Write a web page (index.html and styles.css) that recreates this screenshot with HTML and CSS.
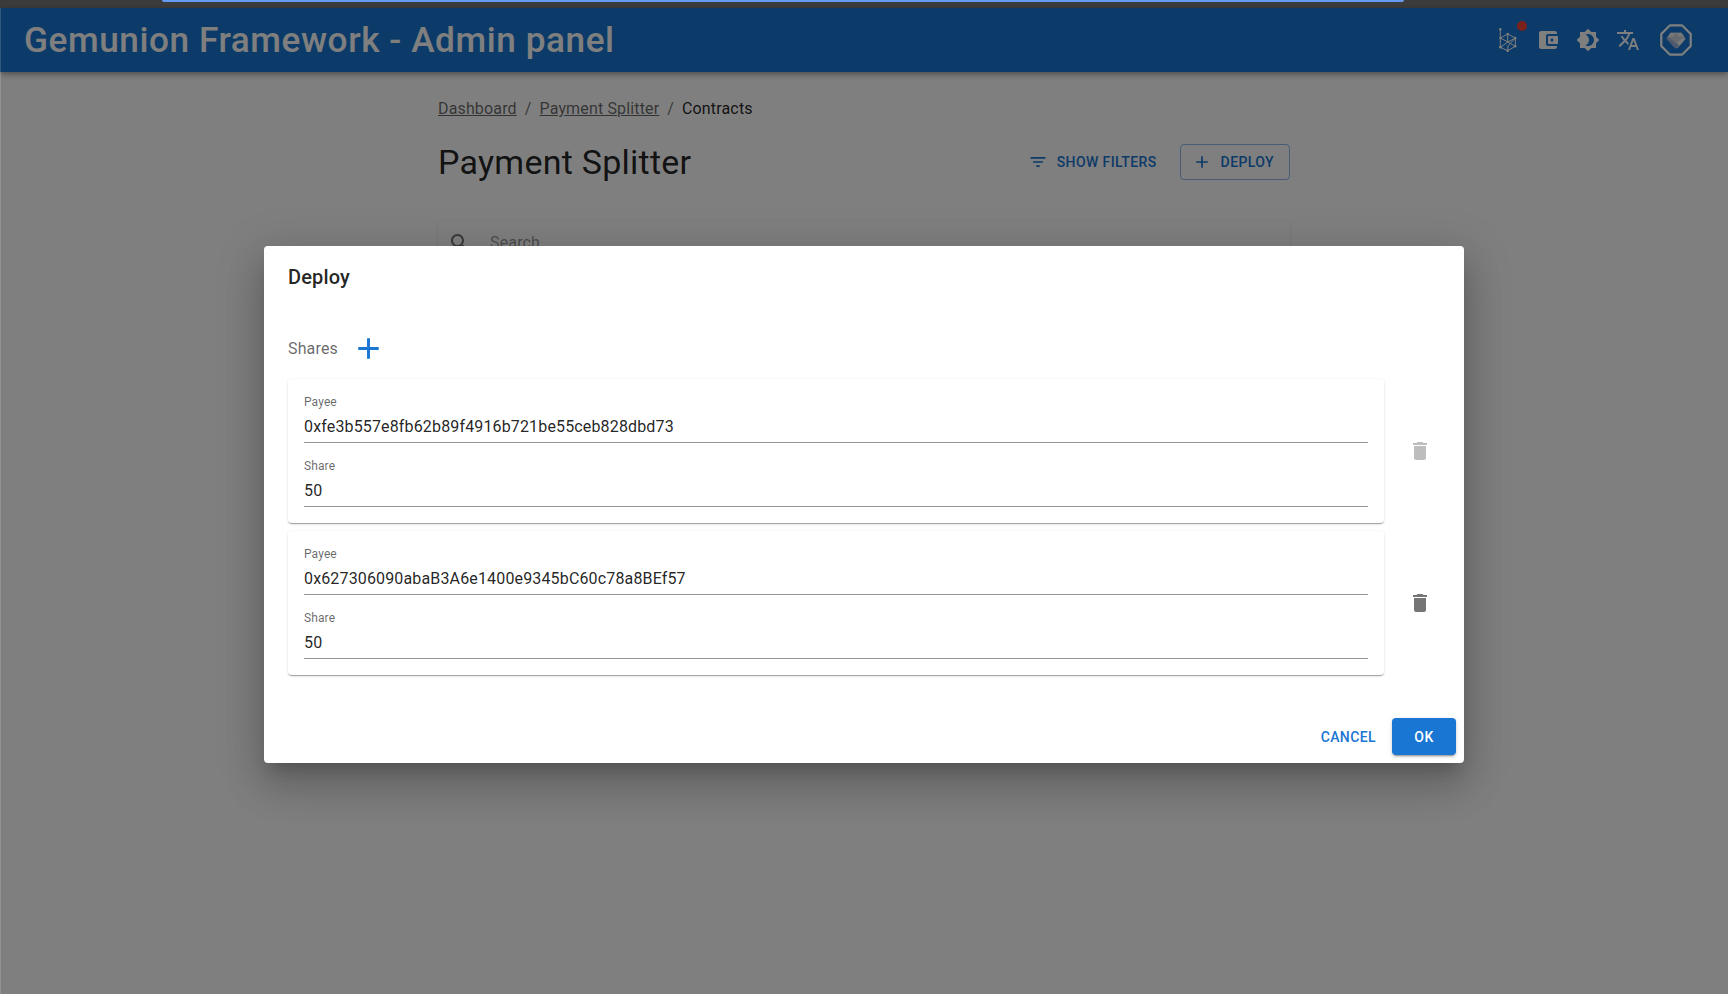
FILE: index.html
```html
<!DOCTYPE html>
<html lang="en">
<head>
<meta charset="utf-8">
<title>Payment Splitter</title>
<link rel="stylesheet" href="styles.css">
</head>
<body>
<div class="browser-edge"><div class="address-bar"></div></div>
<div class="app">
  <header class="app-bar">
    <div class="brand">Gemunion Framework - Admin panel</div>
    <nav class="tools">
      <span class="tool network">
        <svg class="line-icon" width="24" height="26" viewBox="0 0 24 26">
          <path d="M4.300 2v18.300L11.700 23.700L19.300 19.300V11L11.700 7L4.300 11L12 15L19.300 11M11.700 7v8L19.300 19.300M4.300 20.300L12 15M12 19L19.300 11M12 19l-.3 4.700"/>
          <g class="nodes"><circle cx="4.300" cy="2.300" r="1.200"/><circle cx="4.300" cy="11" r="1.100"/><circle cx="4.300" cy="20.300" r="1.200"/><circle cx="11.700" cy="23.700" r="1.300"/><circle cx="19.300" cy="19.300" r="1.200"/><circle cx="19.300" cy="11" r="1.200"/><circle cx="11.700" cy="7" r="1.200"/></g>
        </svg>
        <i class="badge"></i>
      </span>
      <svg class="tool" width="24" height="24" viewBox="0 0 24 24"><path d="M21 18v1c0 1.100-.9 2-2 2H5c-1.110 0-2-.9-2-2V5c0-1.100.89-2 2-2h14c1.100 0 2 .9 2 2v1h-9c-1.110 0-2 .9-2 2v8c0 1.100.89 2 2 2h9zm-9-2h10V8H12v8zm4-2.500c-.83 0-1.500-.67-1.500-1.500s.67-1.500 1.500-1.500 1.500.67 1.500 1.500-.67 1.500-1.500 1.500z"/></svg>
      <svg class="tool" width="24" height="24" viewBox="0 0 24 24"><path d="M20 8.690V4h-4.690L12 .69 8.690 4H4v4.690L.69 12 4 15.310V20h4.690L12 23.310 15.310 20H20v-4.690L23.310 12 20 8.690zM12 18c-.89 0-1.740-.2-2.500-.55C11.560 16.500 13 14.420 13 12s-1.440-4.500-3.500-5.450C10.260 6.200 11.110 6 12 6c3.310 0 6 2.690 6 6s-2.690 6-6 6z"/></svg>
      <svg class="tool" width="24" height="24" viewBox="0 0 24 24"><path d="M12.870 15.070l-2.540-2.510.03-.03c1.740-1.940 2.980-4.170 3.710-6.530H17V4h-7V2H8v2H1v1.990h11.170C11.500 7.920 10.440 9.750 9 11.350 8.070 10.320 7.300 9.190 6.690 8h-2c.73 1.630 1.730 3.170 2.980 4.560l-5.090 5.020L4 19l5-5 3.110 3.110.76-2.040zM18.500 10h-2L12 22h2l1.120-3h4.750L21 22h2l-4.500-12zm-2.620 7l1.620-4.330L19.120 17h-3.240z"/></svg>
      <svg class="avatar" width="32" height="32" viewBox="0 0 32 32">
        <path d="M10 1.300h12l8.700 8.700v12L22 30.700H10L1.300 22V10z" fill="none" stroke="#fff" stroke-width="2.200"/>
        <path d="M10.500 8.700h11L25 13.500 16 20 7 13.500z" fill="#cfd4df"/>
        <path d="M10.500 8.700L8 13l5.500-.5L16 8.700l2.500 3.800L24 13l-2.500-4.300z" fill="#eceef1"/>
        <path d="M6 14.500l3.500-.5 9.500 7.500-2.500 2.800h-1.500z" fill="#a3b3dc"/>
        <path d="M26 14.500l-3.500-.5-6 5 2.500 2.700-2.500 2.600h1z" fill="#f4f4f4"/>
      </svg>
    </nav>
  </header>

  <main class="container">
    <nav class="breadcrumbs"><a>Dashboard</a><span>/</span><a>Payment Splitter</a><span>/</span><b>Contracts</b></nav>
    <div class="page-header">
      <h1>Payment Splitter</h1>
      <div class="page-actions">
        <button class="button text"><svg width="20" height="20" viewBox="0 0 24 24"><path d="M10 18h4v-2h-4v2zM3 6v2h18V6H3zm3 7h12v-2H6v2z"/></svg>Show filters</button>
        <button class="button outlined"><svg width="20" height="20" viewBox="0 0 24 24"><path d="M19 13h-6v6h-2v-6H5v-2h6V5h2v6h6v2z"/></svg>Deploy</button>
      </div>
    </div>
    <div class="search">
      <svg width="24" height="24" viewBox="0 0 24 24"><path d="M15.500 14h-.79l-.28-.27C15.410 12.590 16 11.110 16 9.500 16 5.910 13.090 3 9.500 3S3 5.910 3 9.500 5.910 16 9.500 16c1.610 0 3.090-.59 4.230-1.570l.27.28v.79l5 4.990L20.490 19l-4.990-5zm-6 0C7.010 14 5 11.990 5 9.500S7.010 5 9.500 5 14 7.010 14 9.500 11.990 14 9.500 14z"/></svg>
      <span>Search</span>
    </div>
  </main>

  <div class="backdrop">
    <section class="dialog">
      <h2>Deploy</h2>
      <div class="dialog-content">
        <div class="shares-header"><span>Shares</span>
          <svg width="35" height="35" viewBox="0 0 24 24"><path d="M19 13h-6v6h-2v-6H5v-2h6V5h2v6h6v2z"/></svg>
        </div>
        <div class="share-row">
          <div class="card">
            <div class="field"><label>Payee</label><div class="value">0xfe3b557e8fb62b89f4916b721be55ceb828dbd73</div></div>
            <div class="field"><label>Share</label><div class="value">50</div></div>
          </div>
          <div class="remove disabled"><svg width="24" height="24" viewBox="0 0 24 24"><path d="M6 19c0 1.100.9 2 2 2h8c1.100 0 2-.9 2-2V7H6v12zM19 4h-3.500l-1-1h-5l-1 1H5v2h14V4z"/></svg></div>
        </div>
        <div class="share-row">
          <div class="card">
            <div class="field"><label>Payee</label><div class="value">0x627306090abaB3A6e1400e9345bC60c78a8BEf57</div></div>
            <div class="field"><label>Share</label><div class="value">50</div></div>
          </div>
          <div class="remove"><svg width="24" height="24" viewBox="0 0 24 24"><path d="M6 19c0 1.100.9 2 2 2h8c1.100 0 2-.9 2-2V7H6v12zM19 4h-3.500l-1-1h-5l-1 1H5v2h14V4z"/></svg></div>
        </div>
      </div>
      <div class="dialog-actions">
        <button class="button text">Cancel</button>
        <button class="button contained">OK</button>
      </div>
    </section>
  </div>
</div>
</body>
</html>
```
FILE: styles.css
```css
* { box-sizing: border-box; }
body {
  margin: 0;
  height: 994px;
  overflow: hidden;
  display: flex;
  flex-direction: column;
  background: #fff;
  color: rgba(0, 0, 0, 0.87);
  font-family: Roboto, "Liberation Sans", sans-serif;
  font-size: 16px;
  line-height: 24px;
  letter-spacing: 0.15px;
}
h1, h2 { margin: 0; }
svg { display: block; flex: none; fill: currentColor; }

.browser-edge { height: 8px; flex: none; background: #3c3c3c; }
.address-bar {
  height: 2px;
  margin: 0 324px 0 162px;
  background: #669df6;
  border-radius: 0 0 8px 8px;
}

.app { position: relative; flex: 1; }
.app-bar {
  display: flex;
  align-items: center;
  justify-content: space-between;
  height: 64px;
  padding: 0 36px 0 24px;
  background: #1976d2;
  color: #fff;
  box-shadow: 0 2px 4px -1px rgba(0,0,0,.2), 0 4px 5px 0 rgba(0,0,0,.14), 0 1px 10px 0 rgba(0,0,0,.12);
}
.brand { font-size: 35.2px; font-weight: 500; line-height: 44px; letter-spacing: 0.56px; }
.tools { display: flex; align-items: center; }
.tool { margin-right: 16px; }
.network { position: relative; }
.line-icon { fill: none; stroke: #fff; stroke-width: 1; }
.nodes { fill: #fff; stroke: none; }
.badge {
  position: absolute;
  top: -6px;
  right: -7px;
  width: 10px;
  height: 10px;
  border-radius: 50%;
  background: #f44336;
}
.avatar { margin-left: 4px; }

.container { width: 900px; margin: 0 auto; padding: 25px 24px 0; }
.breadcrumbs { display: flex; }
.breadcrumbs a { color: rgba(0, 0, 0, 0.6); text-decoration: underline; text-decoration-color: rgba(0, 0, 0, 0.6); }
.breadcrumbs span { margin: 0 8px; color: rgba(0, 0, 0, 0.6); }
.breadcrumbs b { font-weight: 400; }
.page-header { display: flex; align-items: center; justify-content: space-between; height: 42px; margin-top: 20px; }
h1 { font-size: 34px; font-weight: 400; line-height: 42px; letter-spacing: 0.25px; }
.page-actions { display: flex; gap: 15px; }

.button {
  display: flex;
  align-items: center;
  justify-content: center;
  min-width: 64px;
  height: 36.5px;
  padding: 0 8px;
  border: 0;
  border-radius: 4px;
  background: none;
  color: #1976d2;
  font: 500 14px/24.500px Roboto, "Liberation Sans", sans-serif;
  letter-spacing: 0.4px;
  text-transform: uppercase;
}
.button svg { margin: 0 9px 0 -4px; }
.outlined { padding: 0 15px; border: 1px solid rgba(25, 118, 210, 0.5); }
.dialog-actions .button { padding-top: 1px; }
.contained {
  background: #1976d2;
  color: #fff;
  box-shadow: 0 3px 1px -2px rgba(0,0,0,.2), 0 2px 2px 0 rgba(0,0,0,.14), 0 1px 5px 0 rgba(0,0,0,.12);
}

.search, .card {
  border-radius: 4px;
  background: #fff;
  box-shadow: 0 2px 1px -1px rgba(0,0,0,.2), 0 1px 1px 0 rgba(0,0,0,.14), 0 1px 3px 0 rgba(0,0,0,.12);
}
.search { display: flex; align-items: center; gap: 18px; height: 44px; margin-top: 37.5px; padding: 0 10px; }
.search svg { color: rgba(0, 0, 0, 0.54); }
.search span { color: rgba(0, 0, 0, 0.42); }

.backdrop { position: absolute; inset: 0; background: rgba(0, 0, 0, 0.5); border-left: 1px solid rgba(255, 255, 255, 0.15); }
.dialog {
  width: 1200px;
  height: 517.25px;
  margin: 237.5px 0 0 263px;
  display: flex;
  flex-direction: column;
  border-radius: 4px;
  background: #fff;
  box-shadow: 0 11px 15px -7px rgba(0,0,0,.2), 0 24px 38px 3px rgba(0,0,0,.14), 0 9px 46px 8px rgba(0,0,0,.12);
}
h2 { padding: 15px 24px 17px; font-size: 20px; font-weight: 500; line-height: 32px; }
.dialog-content { flex: 1; padding: 13px 24px 0; }
.shares-header { display: flex; align-items: center; gap: 13px; height: 51px; color: rgba(0, 0, 0, 0.6); }
.shares-header span { padding-top: 1px; }
.shares-header svg { color: #1976d2; }
.share-row { display: grid; grid-template-columns: 1096px 1fr; margin-bottom: 8px; }
.shares-header + .share-row { margin-top: 5px; }
.card { display: flex; flex-direction: column; gap: 16px; height: 144px; padding: 16px; }
.field { height: 48px; border-bottom: 1px solid rgba(0, 0, 0, 0.42); }
.field label { display: block; height: 17px; color: rgba(0, 0, 0, 0.6); font-size: 12px; line-height: 15px; letter-spacing: 0.11px; }
.field .value { margin-top: 3px; line-height: 23px; }
.remove { display: flex; align-items: center; padding-left: 24px; color: rgba(0, 0, 0, 0.54); }
.disabled { color: rgba(0, 0, 0, 0.26); }
.dialog-actions { display: flex; justify-content: flex-end; gap: 8px; padding: 8px; }
```
